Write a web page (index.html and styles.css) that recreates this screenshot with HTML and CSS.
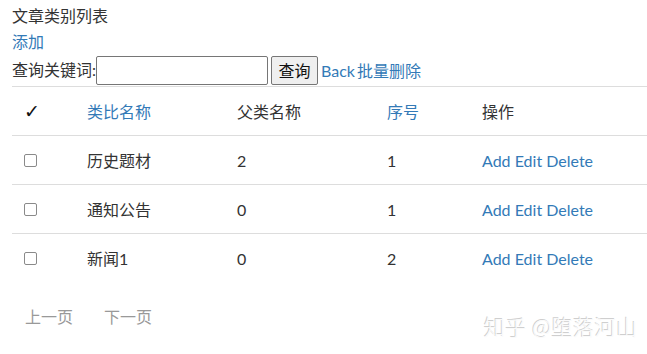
FILE: index.html
```html
<!DOCTYPE html>
<html lang="zh">
<head>
<meta charset="utf-8">
<title>文章类别列表</title>
<link rel="stylesheet" href="styles.css">
</head>
<body>
<div class="page">
  <div class="title">文章类别列表</div>
  <div class="line"><a href="#" class="link">添加</a></div>
  <form class="search">
    <label class="search-label">查询关键词:</label>
    <input type="text" class="search-input">
    <button type="button" class="search-btn">查询</button>
    <a href="#" class="link back">Back</a><a href="#" class="link">批量删除</a>
  </form>
  <table class="grid">
    <colgroup>
      <col class="c1"><col class="c2"><col class="c3"><col class="c4"><col class="c5">
    </colgroup>
    <thead>
      <tr>
        <th class="check-head">✓</th>
        <th><a href="#" class="link">类比名称</a></th>
        <th>父类名称</th>
        <th><a href="#" class="link">序号</a></th>
        <th>操作</th>
      </tr>
    </thead>
    <tbody>
      <tr>
        <td><span class="box"></span></td>
        <td>历史题材</td>
        <td>2</td>
        <td>1</td>
        <td><a href="#" class="link">Add</a> <a href="#" class="link">Edit</a> <a href="#" class="link">Delete</a></td>
      </tr>
      <tr>
        <td><span class="box"></span></td>
        <td>通知公告</td>
        <td>0</td>
        <td>1</td>
        <td><a href="#" class="link">Add</a> <a href="#" class="link">Edit</a> <a href="#" class="link">Delete</a></td>
      </tr>
      <tr>
        <td><span class="box"></span></td>
        <td>新闻1</td>
        <td>0</td>
        <td>2</td>
        <td><a href="#" class="link">Add</a> <a href="#" class="link">Edit</a> <a href="#" class="link">Delete</a></td>
      </tr>
    </tbody>
  </table>
  <div class="pager">
    <span class="pg">上一页</span>
    <span class="pg">下一页</span>
  </div>
</div>
<div class="watermark">知乎 @堕落河山</div>
</body>
</html>
```

FILE: styles.css
```css
html, body {
  margin: 0;
  padding: 0;
  background: #fff;
}
body {
  font-family: "Lato", "Noto Sans CJK SC", sans-serif;
  font-size: 16px;
  color: #333;
  position: relative;
  width: 647px;
  height: 354px;
  overflow: hidden;
}
.page {
  padding: 3px 0 0 12px;
}
.title, .line {
  height: 26px;
  line-height: 26px;
}
.link {
  color: #337ab7;
  text-decoration: none;
}
.search {
  display: flex;
  align-items: center;
  height: 30px;
  margin: 0;
}
.search-label {
  line-height: 26px;
}
.search-input {
  width: 166px;
  height: 27px;
  margin: 0;
  padding: 0 2px;
  border: 1px solid #767676;
  border-radius: 2px;
  box-sizing: content-box;
}
.search-btn {
  margin: 0 3px 0 3px;
  height: 29px;
  width: 47px;
  padding: 0;
  font-family: "Noto Sans CJK SC", sans-serif;
  font-size: 16px;
  color: #111;
  background: #efefef;
  border: 1px solid #767676;
  border-radius: 2px;
}
.back {
  margin-right: 2px;
}
.grid {
  margin-top: 1px;
  width: 635px;
  border-collapse: collapse;
  table-layout: fixed;
}
.c1 { width: 63px; }
.c2 { width: 150px; }
.c3 { width: 150px; }
.c4 { width: 95px; }
.c5 { width: 177px; }
.grid th, .grid td {
  height: 48px;
  padding: 0 12px;
  text-align: left;
  font-weight: normal;
  vertical-align: middle;
  white-space: nowrap;
}
.grid thead tr {
  border-top: 1px solid #ddd;
  border-bottom: 1px solid #ddd;
}
.grid tbody tr + tr {
  border-top: 1px solid #ddd;
}
.grid .check-head {
  font-family: "DejaVu Sans", sans-serif;
  color: #111;
  font-size: 19px;
  font-weight: bold;
}
.box {
  display: inline-block;
  width: 11px;
  height: 11px;
  border: 1px solid #8a8a8a;
  border-radius: 2px;
  vertical-align: middle;
  position: relative;
  top: -2px;
}
.pager {
  display: flex;
  gap: 31px;
  padding: 22px 0 0 13px;
}
.pg {
  color: #999;
  font-family: "Noto Sans CJK SC", sans-serif;
  font-size: 16px;
}
.watermark {
  position: absolute;
  left: 484px;
  top: 311px;
  font-family: "Noto Sans CJK SC", sans-serif;
  font-size: 21px;
  font-weight: 300;
  color: #fafafa;
  text-shadow: -1px -1px 0 #cfcfcf, 1px 1px 0 #fff;
  letter-spacing: 0.5px;
}
```
